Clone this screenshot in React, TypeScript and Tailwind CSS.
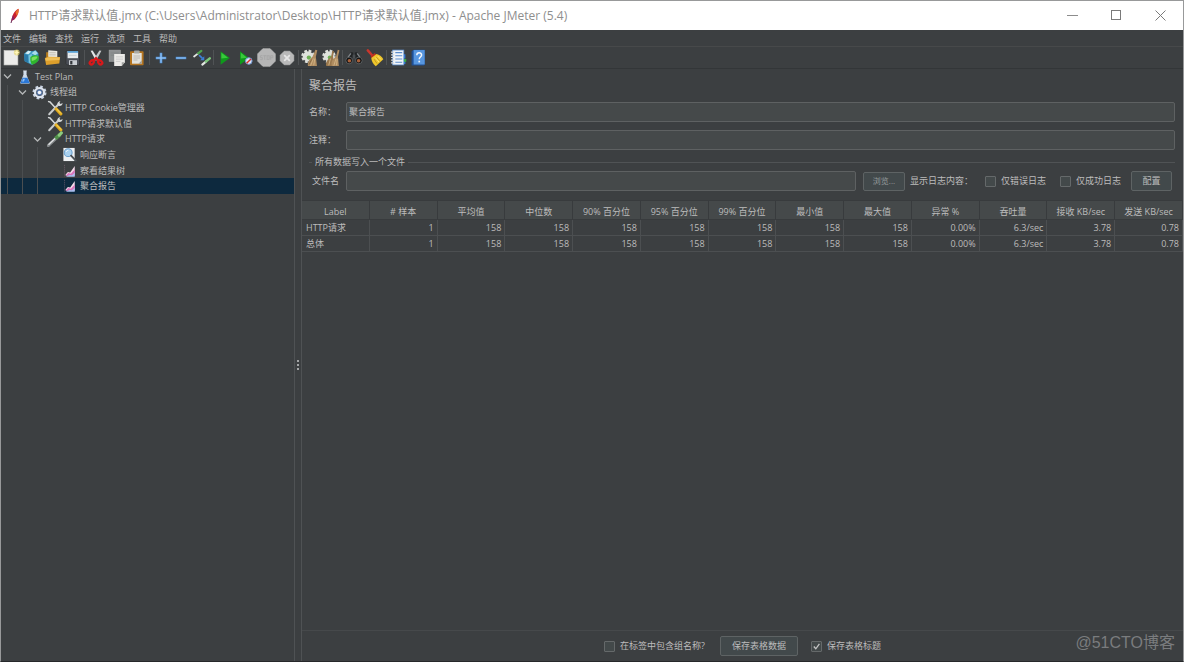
import React from "react";

function Svg({ size = 16, children }: { size?: number; children: React.ReactNode }) {
  return (
    <svg width={size} height={size} viewBox="0 0 16 16" fill="none" aria-hidden="true" className="block shrink-0">
      {children}
    </svg>
  );
}

/* ---------- toolbar icons ---------- */

const NewIcon = () => (
  <Svg size={17}>
    <rect x="1" y="1.5" width="13" height="13.5" fill="#ececea" stroke="#cfcfcb" strokeWidth=".6" />
    <circle cx="13" cy="3.2" r="2.8" fill="#e8d76a" opacity=".65" />
    <path d="M13 .6l.7 1.9 1.9.7-1.9.7-.7 1.9-.7-1.9-1.9-.7 1.9-.7z" fill="#fff6b8" />
  </Svg>
);

const TemplatesIcon = () => (
  <Svg size={17}>
    <path d="M1 4.5l3.5-3 4 .5 3.5-.8L14.5 4v7l-6 4-7-3.5z" fill="#3d9bc4" />
    <path d="M1 4.5l4 1.5v7.5L1.5 11z" fill="#2a79a8" />
    <path d="M2 4.2L5 1.7l2.8.6L5.2 5z" fill="#d3ecf5" />
    <path d="M8 4l3.5-2.6L14 4l-2.5 1.8z" fill="#a9dcea" />
    <path d="M5.2 6l3-1.5 1 9.5-3.6-1z" fill="#78c4dc" />
    <path d="M7 7.5c2.5-2 6-2 7.8-.6.4 3.600-.8 6.300-6.300 8C7 13 6.600 10 7 7.500z" fill="#2fb52c" />
    <path d="M8 8.200c1.800-1.300 4-1.500 5.800-.8-1 2.400-3 3.600-5.500 4z" fill="#7be05f" />
  </Svg>
);

const OpenIcon = () => (
  <Svg size={17}>
    <path d="M2 3h3l1 1v8H2z" fill="#b67b1c" />
    <path d="M4 1.200l8.500.6v8H4z" fill="#e9e7df" />
    <path d="M5 3.500h6M5 5.500h6" stroke="#b9b6aa" strokeWidth=".8" />
    <path d="M.8 8.500l3-1.200 11.400.2-.8 6.200L2 15z" fill="#dd9f2b" />
    <path d="M1.200 8.900l3-1.100 10.600.2-.3 2.300-12.800.8z" fill="#efbf58" />
  </Svg>
);

const SaveIcon = () => (
  <Svg size={16}>
    <path d="M1 1h13.500v14H2.500L1 13.500z" fill="#4c5058" stroke="#2b2d31" strokeWidth=".6" />
    <rect x="2.600" y="1" width="10.400" height="7.200" fill="#e7ebee" />
    <rect x="2.600" y="1" width="10.400" height="1.800" fill="#5aa2d6" />
    <path d="M4 5.400h7.500" stroke="#c2c8cc" strokeWidth=".7" />
    <rect x="4" y="10.200" width="8" height="4.800" fill="#c9cdd1" />
    <rect x="5.200" y="11" width="2.200" height="3.400" fill="#34373c" />
  </Svg>
);

const CutIcon = () => (
  <Svg size={16}>
    <path d="M2.600.8l2-.4 5.600 8.800-2.400 1.400z" fill="#e4e6e8" />
    <path d="M13.400.8l-2-.4L5.800 9.200l2.400 1.400z" fill="#c4c8ca" />
    <ellipse cx="3.800" cy="12.400" rx="2.300" ry="1.700" transform="rotate(-45 3.800 12.400)" stroke="#d8191b" strokeWidth="2.300" />
    <ellipse cx="12.200" cy="12.400" rx="2.300" ry="1.700" transform="rotate(45 12.200 12.400)" stroke="#d8191b" strokeWidth="2.300" />
    <path d="M5.200 10.800L8 8.200l2.800 2.600" stroke="#d8191b" strokeWidth="2.400" />
  </Svg>
);

const CopyIcon = () => (
  <Svg size={18}>
    <rect x="1" y="1" width="10" height="10" fill="#8d9091" stroke="#a4a6a6" strokeWidth=".5" />
    <path d="M2.500 3.500h7M2.500 5.500h7" stroke="#7f8384" strokeWidth=".7" />
    <path d="M5.500 4.500H15v7.300L12.200 15H5.500z" fill="#ecebe8" />
    <path d="M7 7h6.400M7 9h6.400M7 11h4" stroke="#c9cac8" strokeWidth=".8" />
    <path d="M15 11.800h-2.800V15z" fill="#a3a4a2" />
  </Svg>
);

const PasteIcon = () => (
  <Svg size={16}>
    <rect x="1" y="1.200" width="13.600" height="14" rx=".8" fill="#b37420" />
    <rect x="3" y="3" width="9.700" height="10.700" fill="#e3e2dc" />
    <rect x="5" y=".5" width="5.600" height="3" rx=".8" fill="#a9aaa5" />
    <path d="M4.500 6h6.500M4.500 8h6.500M4.500 10h4" stroke="#b2b1aa" strokeWidth=".8" />
    <path d="M12.700 10.400L9.500 13.700h3.200z" fill="#9c9a92" />
  </Svg>
);

const PlusIcon = () => (
  <Svg size={14}>
    <path d="M8 2v12M2 8h12" stroke="#4b8fd8" strokeWidth="3" />
    <path d="M8 2.600v10.800M2.600 8h10.800" stroke="#a5cdf5" strokeWidth="1.100" />
  </Svg>
);

const MinusIcon = () => (
  <Svg size={14}>
    <path d="M2 8h12" stroke="#4b8fd8" strokeWidth="2.800" />
    <path d="M2.600 8h10.800" stroke="#a5cdf5" strokeWidth="1" />
  </Svg>
);

const ToggleIcon = () => (
  <Svg size={18}>
    <path d="M1 6.700L4.600 3.900" stroke="#e4e7e4" strokeWidth="1.600" strokeLinecap="round" />
    <path d="M4.600 3.900L7.400 1.700" stroke="#4fa350" strokeWidth="2" strokeLinecap="round" />
    <path d="M8.300 13.900l3.200-2.700" stroke="#e4e7e4" strokeWidth="1.900" strokeLinecap="round" />
    <path d="M11.500 11.100l3.400-2.800" stroke="#7cc77b" strokeWidth="2.200" strokeLinecap="round" />
    <path d="M5.400 5.400l3 3" stroke="#3d7fd4" strokeWidth="1.500" />
    <path d="M10 6.400v3.600H6.400z" fill="#3d7fd4" />
  </Svg>
);

const StartIcon = () => (
  <Svg size={16}>
    <path d="M3.600 1.200L12.800 8l-9.200 6.800z" fill="#0f9a1c" />
    <path d="M4.400 2.800L11 7.800l-6.600.8z" fill="#39c93c" />
  </Svg>
);

const StartNoTimersIcon = () => (
  <Svg size={16}>
    <path d="M2 1.200L11 8l-9 6.800z" fill="#0f9a1c" />
    <path d="M2.800 2.800L9 7.800l-6.200.8z" fill="#39c93c" />
    <circle cx="10.800" cy="11" r="3.300" fill="#dfe6f4" stroke="#6f94cf" strokeWidth="1" />
    <path d="M8.600 13.200L13 9" stroke="#d8322b" strokeWidth="1.500" />
  </Svg>
);

const StopIcon = () => (
  <Svg size={19}>
    <path d="M4.900.6h6.200l4.300 4.300v6.200l-4.300 4.300H4.900L.6 11.100V4.900z" fill="#b6b6b6" stroke="#c8c8c8" strokeWidth=".5" />
    <g stroke="#a6a6a6" strokeWidth=".8">
      <path d="M4.600 6.500H2.900v1.600h1.600v1.700H2.700" />
      <path d="M5.300 6.500h2.500M6.500 6.500v3.500" />
      <rect x="8.500" y="6.500" width="1.700" height="3.200" />
      <path d="M11.500 10V6.500h1.800v1.700h-1.800" />
    </g>
  </Svg>
);

const ShutdownIcon = () => (
  <Svg size={16}>
    <path d="M5.200 1.200h5.600l4 4v5.600l-4 4H5.200l-4-4V5.200z" fill="#b9b9b9" stroke="#cdcdcd" strokeWidth=".5" />
    <path d="M5.200 5.200l5.600 5.600M10.800 5.200l-5.600 5.600" stroke="#e6e6e6" strokeWidth="1.800" />
  </Svg>
);

const Gear = () => (
  <>
    <circle cx="6.200" cy="6.500" r="5" stroke="#dfe2dc" strokeWidth="2" strokeDasharray="2.400 1.530" />
    <circle cx="6.200" cy="6.500" r="4.600" fill="#dfe2dc" />
    <circle cx="7" cy="7.600" r="1.900" fill="#6dae55" />
  </>
);

const ClearIcon = () => (
  <Svg size={18}>
    <Gear />
    <path d="M12.800.6l1.700.5-1.300 5.700 1 8.200-8 .2c-.5-1.800.2-4 1.300-5.700l3-3z" fill="#b08d61" />
    <path d="M11 8.500L8.500 14.800M12.300 8.500l-1 6" stroke="#d3b486" strokeWidth=".8" />
    <path d="M9.500 9.200L7 14" stroke="#7d5f39" strokeWidth=".7" />
  </Svg>
);

const ClearAllIcon = () => (
  <Svg size={18}>
    <Gear />
    <path d="M9.300 1.600l1.300.4-.8 4.600 1 8.400-7 .2c-.7-1.800.2-4 1.300-5.600l2.900-2.700z" fill="#9a784d" />
    <path d="M14 .6l1.500.5-1.300 5.700.8 8.200-6.300.2c-.5-1.800-.3-4 .8-5.700l3-3z" fill="#b08d61" />
    <path d="M12.500 8.500l-2 6.300M7.500 8.500l-1.500 6M13.500 9l-.6 5.500" stroke="#d3b486" strokeWidth=".8" />
  </Svg>
);

const SearchIcon = () => (
  <Svg size={18}>
    <path d="M5.300 2.800l2 .4v4.600l-3 2L.6 9.200z" fill="#202325" />
    <path d="M10.700 2.800l-2 .4v4.600l3 2 3.700-.6z" fill="#202325" />
    <rect x="6.800" y="5" width="2.400" height="3.400" fill="#4b4f52" />
    <path d="M5.200 3.800L2.600 7.400M10.800 3.800l2.600 3.600" stroke="#80868a" strokeWidth="1.200" />
    <circle cx="3.700" cy="10.200" r="3" fill="#141516" stroke="#5f6365" strokeWidth=".8" />
    <circle cx="12.300" cy="10.200" r="3" fill="#141516" stroke="#5f6365" strokeWidth=".8" />
    <circle cx="3.900" cy="10.400" r="1.600" fill="#a8603a" />
    <circle cx="12.100" cy="10.400" r="1.600" fill="#a8603a" />
  </Svg>
);

const BroomIcon = () => (
  <Svg size={18}>
    <path d="M1.600 1.200L6 6.200" stroke="#c8362c" strokeWidth="2.200" strokeLinecap="round" />
    <path d="M4 6.900l3.700-3.300 2.600 2.600-3.700 3.300z" fill="#b9301f" />
    <path d="M4.700 8L9.400 4.400c2.400.5 4.600 2.300 6 4.600l-6.700 6.300c-2.400-1.600-3.800-4.500-4-7.300z" fill="#efc62b" />
    <path d="M7.200 9l2.600 4M9.200 7.400l3.300 3.600" stroke="#b8901d" strokeWidth=".7" />
    <path d="M8.300 7.600l3.200 4M10.400 6.200l3 3.200" stroke="#fbe67a" strokeWidth=".8" />
  </Svg>
);

const LogIcon = () => (
  <Svg size={17}>
    <path d="M12 5h2.500v4H12zM12 9.500h2.500V14H12z" fill="#2f77d2" />
    <rect x="12.500" y="9.500" width="2.800" height="2.500" fill="#38b13a" />
    <rect x="2.500" y="1" width="10.500" height="14" fill="#f1f4f8" stroke="#5f93d6" strokeWidth=".7" />
    <path d="M5 3.400h6.500M5 6.400h6.500M5 9.400h6.500M5 12.400h6.500" stroke="#5b8ccc" strokeWidth="1" />
    <path d="M1 3h3M1 5.500h3M1 8h3M1 10.500h3M1 13h3" stroke="#d6d9db" strokeWidth="1.100" />
  </Svg>
);

const HelpIcon = () => (
  <Svg size={17}>
    <path d="M1.500 2L3.500.7H14v14L13 15.500H1.500z" fill="#1f4f94" />
    <rect x="3.400" y="1" width="10.400" height="13.600" fill="#5796df" />
    <path d="M6.400 5.800c0-3 4.500-2.900 4.500-.2 0 1.900-2.200 1.900-2.200 4" stroke="#f3f7fc" strokeWidth="1.400" />
    <rect x="7.900" y="11" width="1.600" height="1.600" fill="#f3f7fc" />
  </Svg>
);

/* ---------- tree icons ---------- */

const FlaskIcon = () => (
  <Svg size={14}>
    <path d="M6 1h4M6.700 1v4.500L3 15h10L9.300 5.500V1" fill="#cfdcea" stroke="#dbe4ee" strokeWidth=".9" />
    <path d="M5.200 8.800h5.600l2.600 6.200H2.600z" fill="#2b78d8" />
    <path d="M5.800 10h2.200l-1.200 3.200H4.700z" fill="#8fc0f5" />
  </Svg>
);

const ThreadIcon = () => (
  <Svg size={15}>
    <circle cx="8" cy="8" r="6.200" stroke="#c9d3e2" strokeWidth="2.600" strokeDasharray="2.700 2.170" />
    <circle cx="8" cy="8" r="4.800" stroke="#dde4ee" strokeWidth="2.400" />
    <circle cx="8" cy="8" r="3.300" fill="#5877a8" />
    <circle cx="8" cy="8" r="1.900" fill="#f2f5f9" />
  </Svg>
);

const ToolsIcon = () => (
  <Svg size={16}>
    <path d="M2.200 14.200L11.800 4" stroke="#c9cccd" strokeWidth="2" strokeLinecap="round" />
    <path d="M10.400 4.800c-.4-2 1-3.700 3-3.900l-1 2 1.200 1.200 2-1c0 2-1.800 3.300-3.700 2.900z" fill="#d5d8d9" />
    <path d="M1.600 1.600l1.400.4 5.700 6.200" stroke="#d5d8d9" strokeWidth="1.500" strokeLinecap="round" />
    <path d="M9.200 9l4.600 4.900" stroke="#e0a91b" strokeWidth="3.200" strokeLinecap="round" />
    <path d="M9.400 8.700l4.700 4.900" stroke="#f8dc6e" strokeWidth="1" />
  </Svg>
);

const DropperIcon = () => (
  <Svg size={16}>
    <path d="M1.200 14.600L9.800 6.600" stroke="#85898b" strokeWidth="3" strokeLinecap="round" />
    <path d="M1.500 13.800L9.200 6.400" stroke="#e4e6e7" strokeWidth="1.300" />
    <path d="M8.400 7.700l4.800-4.400" stroke="#4f8f48" strokeWidth="3.800" />
    <path d="M12.200 4.200l2.200-2.300" stroke="#8ccb7e" strokeWidth="3" strokeLinecap="round" />
  </Svg>
);

const AssertionIcon = () => (
  <Svg size={15}>
    <rect x="1.500" y="1" width="12" height="14" fill="#eef0f2" />
    <circle cx="6.600" cy="6" r="4.200" fill="#a9d0ee" stroke="#6a9ecb" strokeWidth="1.100" />
    <path d="M4.400 5.200c.4-1.100 1.300-1.600 2.300-1.600" stroke="#fff" strokeWidth="1" />
    <path d="M9.700 9.200l5 5.300" stroke="#4b5055" strokeWidth="2" strokeLinecap="round" />
  </Svg>
);

const ChartIcon = () => (
  <Svg size={14}>
    <path d="M1.800 1v13.600" stroke="#8c6f80" strokeWidth=".8" strokeDasharray="1 1.200" />
    <path d="M3 12l2.600-3 2.600.8L13.400 2.400v10.600H3z" fill="#f5dcea" />
    <path d="M3 13.500l3-3.300 3 .8 4.400-4.600v7.100z" fill="#d873ba" />
    <path d="M3 14.600l4.500-2 2.700.3 3.200-2.900v4.600z" fill="#a9c0ee" />
  </Svg>
);

const Chevron = () => (
  <svg width="9" height="9" viewBox="0 0 9 9" fill="none" aria-hidden="true" className="block">
    <path d="M1 2.500L4.500 6 8 2.500" stroke="#b4b6b7" strokeWidth="1.300" />
  </svg>
);

const FeatherIcon = () => (
  <svg width="12" height="16" viewBox="0 0 12 16" fill="none" aria-hidden="true" className="block">
    <path d="M2 15L3.500 9.500" stroke="#6b2a57" strokeWidth="1" />
    <path d="M2.800 12.500C2.600 8 5.500 2.500 9.500.8c.6 3-.8 6.700-2.800 9.200-1.100 1.300-2.400 2.300-3.900 2.500z" fill="#c9202e" />
    <path d="M9.500.8c.6 3-.4 5.200-1.800 6.900L6.500 4.500C7.400 2.900 8.400 1.500 9.500.8z" fill="#e8702b" />
    <path d="M2.800 12.500c0-1.800.4-3.700 1.200-5.500l1.700 4c-.9.800-1.900 1.400-2.900 1.500z" fill="#8b2264" />
  </svg>
);

/* ---------- data ---------- */

const menus = ["文件", "编辑", "查找", "运行", "选项", "工具", "帮助"];

type Tool = { label: string; icon: React.ComponentType };

const toolGroups: Tool[][] = [
  [
    { label: "新建", icon: NewIcon },
    { label: "模板", icon: TemplatesIcon },
    { label: "打开", icon: OpenIcon },
    { label: "保存", icon: SaveIcon },
  ],
  [
    { label: "剪切", icon: CutIcon },
    { label: "复制", icon: CopyIcon },
    { label: "粘贴", icon: PasteIcon },
  ],
  [
    { label: "展开", icon: PlusIcon },
    { label: "收起", icon: MinusIcon },
    { label: "切换", icon: ToggleIcon },
  ],
  [
    { label: "启动", icon: StartIcon },
    { label: "不停顿开始", icon: StartNoTimersIcon },
    { label: "停止", icon: StopIcon },
    { label: "关闭", icon: ShutdownIcon },
  ],
  [
    { label: "清除", icon: ClearIcon },
    { label: "清除全部", icon: ClearAllIcon },
  ],
  [
    { label: "查找", icon: SearchIcon },
    { label: "重置搜索", icon: BroomIcon },
  ],
  [
    { label: "函数助手", icon: LogIcon },
    { label: "帮助", icon: HelpIcon },
  ],
];

type Node = { label: string; depth: number; open?: boolean; icon: React.ComponentType; selected?: boolean };

const nodes: Node[] = [
  { label: "Test Plan", depth: 0, open: true, icon: FlaskIcon },
  { label: "线程组", depth: 1, open: true, icon: ThreadIcon },
  { label: "HTTP Cookie管理器", depth: 2, icon: ToolsIcon },
  { label: "HTTP请求默认值", depth: 2, icon: ToolsIcon },
  { label: "HTTP请求", depth: 2, open: true, icon: DropperIcon },
  { label: "响应断言", depth: 3, icon: AssertionIcon },
  { label: "察看结果树", depth: 3, icon: ChartIcon },
  { label: "聚合报告", depth: 3, icon: ChartIcon, selected: true },
];

const columns = [
  "Label", "# 样本", "平均值", "中位数", "90% 百分位", "95% 百分位", "99% 百分位",
  "最小值", "最大值", "异常 %", "吞吐量", "接收 KB/sec", "发送 KB/sec",
];

const rows = [
  ["HTTP请求", "1", "158", "158", "158", "158", "158", "158", "158", "0.00%", "6.3/sec", "3.78", "0.78"],
  ["总体", "1", "158", "158", "158", "158", "158", "158", "158", "0.00%", "6.3/sec", "3.78", "0.78"],
];

/* ---------- pieces ---------- */

const field = "min-w-0 flex-1 rounded-[2px] border border-[#5e6162] bg-[#45494a] px-[2px] text-[#bcbcbc] outline-none";
const button = "rounded-[2px] border border-[#5e6364] bg-[#42494b]";

function Check({ label, checked, className = "" }: { label: string; checked?: boolean; className?: string }) {
  return (
    <label className={"flex items-center gap-[5px] whitespace-nowrap " + className}>
      <span className="grid size-[11px] place-items-center">
        <input
          type="checkbox"
          defaultChecked={checked}
          className="peer col-start-1 row-start-1 size-[11px] appearance-none rounded-[1px] border border-[#65696a] bg-[#43494a]"
        />
        <svg
          viewBox="0 0 11 11"
          fill="none"
          aria-hidden="true"
          className="pointer-events-none col-start-1 row-start-1 hidden size-[11px] peer-checked:block"
        >
          <path d="M2.800 5.500l2 2.300L8.400 2.800" stroke="#c4c4c4" strokeWidth="1.300" />
        </svg>
      </span>
      {label}
    </label>
  );
}

function TreeRow({ node }: { node: Node }) {
  const Icon = node.icon;
  return (
    <li className={"flex items-stretch pl-px " + (node.selected ? "bg-[#0d293e]" : "")}>
      {Array.from({ length: node.depth }, (_, i) => (
        <span key={i} className="flex w-[15px] shrink-0 pl-[5px]">
          <span className="w-px bg-[#4b4e50]" />
        </span>
      ))}
      <span className="flex w-[13px] shrink-0 items-center pl-px">{node.open && <Chevron />}</span>
      <span className="mr-px flex w-[19px] shrink-0 items-center justify-center">
        <Icon />
      </span>
      <span className="self-center whitespace-nowrap">{node.label}</span>
    </li>
  );
}

export default function App() {
  return (
    <div className="relative flex min-h-screen flex-col border-x border-t border-[#98999a] border-b border-b-[#26282a] bg-[#3c3f41] font-['Open_Sans','Noto_Sans_CJK_SC',sans-serif] text-[9px] leading-[14px] text-[#bcbcbc]">
      <header className="flex h-[29px] items-center bg-white pr-px text-[#8e8e8e]">
        <span className="pl-[8px]">
          <FeatherIcon />
        </span>
        <h1 className="flex-1 truncate pl-[8px] text-[12px] leading-[16px]">
          HTTP请求默认值.jmx (C:\Users\Administrator\Desktop\HTTP请求默认值.jmx) - Apache JMeter (5.4)
        </h1>
        <div className="flex items-center">
          <button aria-label="最小化" className="flex w-[44px] justify-center">
            <svg width="11" height="11" viewBox="0 0 11 11" fill="none"><path d="M0 5.500h11" stroke="#8c8c8c" /></svg>
          </button>
          <button aria-label="最大化" className="flex w-[44px] justify-center">
            <svg width="11" height="11" viewBox="0 0 11 11" fill="none"><rect x=".5" y=".5" width="9" height="9" stroke="#7a7a7a" /></svg>
          </button>
          <button aria-label="关闭窗口" className="flex w-[44px] justify-center">
            <svg width="11" height="11" viewBox="0 0 11 11" fill="none"><path d="M.5.5l10 10M10.500.5l-10 10" stroke="#7a7a7a" /></svg>
          </button>
        </div>
      </header>

      <nav className="flex h-[17px] items-center gap-[8px] border-b border-[#47494a] pt-[2px] pl-[2px]">
        {menus.map((m) => (
          <button key={m}>{m}</button>
        ))}
      </nav>

      <div className="border-b border-[#333638]">
        <div className="flex h-[21px] w-[428px] items-center">
          {toolGroups.map((group, g) => (
            <React.Fragment key={g}>
              {g > 0 && (
                <span className="flex w-[3px] shrink-0 justify-center">
                  <span className="h-[15px] w-px bg-[#505355]" />
                </span>
              )}
              {group.map(({ label, icon: Icon }) => (
                <button key={label} aria-label={label} className="flex min-w-0 flex-1 justify-center">
                  <Icon />
                </button>
              ))}
            </React.Fragment>
          ))}
        </div>
      </div>

      <div className="flex flex-1">
        <aside className="w-[294px] shrink-0 border-r border-[#4f5254]">
          <ul className="grid h-[125px] grid-rows-[repeat(8,minmax(0,1fr))]">
            {nodes.map((n, i) => (
              <TreeRow key={i} node={n} />
            ))}
          </ul>
        </aside>

        <div className="flex w-[7px] shrink-0 flex-col items-center justify-center gap-[2px] border-r border-[#4f5254]">
          <span className="size-[2px] bg-[#a3a5a6]" />
          <span className="size-[2px] bg-[#a3a5a6]" />
          <span className="size-[2px] bg-[#a3a5a6]" />
        </div>

        <main className="flex min-w-0 flex-1 flex-col">
          <h2 className="pt-[8px] pl-[7px] text-[12px] leading-[18px]">聚合报告</h2>

          <div className="mt-[7px] flex h-[20px] items-stretch pr-[8px] pl-[7px]">
            <label htmlFor="name" className="w-[37px] shrink-0 self-center">名称：</label>
            <input id="name" defaultValue="聚合报告" className={field} />
          </div>
          <div className="mt-[8px] flex h-[20px] items-stretch pr-[8px] pl-[7px]">
            <label htmlFor="comment" className="w-[37px] shrink-0 self-center">注释：</label>
            <input id="comment" className={field} />
          </div>

          <section className="mt-[5px] pr-[8px] pl-[7px]">
            <h3 className="flex items-center gap-[3px]">
              <span className="h-px w-[3px] bg-[#505355]" />
              所有数据写入一个文件
              <span className="h-px flex-1 bg-[#505355]" />
            </h3>
            <div className="mt-[2px] flex h-[20px] items-center pr-[3px]">
              <label htmlFor="file" className="w-[37px] shrink-0 pl-[3px]">文件名</label>
              <input id="file" className={field + " h-full"} />
              <button className={button + " ml-[7px] h-[19px] w-[42px] text-[8px] leading-[12px] text-[#959a9b]"}>浏览...</button>
              <span className="ml-[5px] w-[75px] whitespace-nowrap">显示日志内容：</span>
              <Check label="仅错误日志" className="w-[75px]" />
              <Check label="仅成功日志" className="w-[71px]" />
              <button className={button + " h-full w-[41px]"}>配置</button>
            </div>
          </section>

          <table className="mt-[9px] w-full table-fixed border-separate border-spacing-0">
            <thead>
              <tr className="bg-[#45494a]">
                {columns.map((c) => (
                  <th key={c} className="h-[20px] border-t border-r border-b border-t-[#383b3d] border-r-[#383b3d] border-b-[#383b3d] p-0 pt-[3px] font-normal whitespace-nowrap">
                    {c}
                  </th>
                ))}
              </tr>
            </thead>
            <tbody>
              {rows.map((r) => (
                <tr key={r[0]}>
                  {r.map((c, i) => (
                    <td key={i} className={"h-[16px] border-r border-b border-[#4c4f51] py-0 " + (i === 0 ? "pl-[4px] text-left" : "pr-[3px] text-right")}>
                      {c}
                    </td>
                  ))}
                </tr>
              ))}
            </tbody>
          </table>

          <footer className="mt-auto flex h-[31px] items-center justify-center border-t border-[#46494b]">
            <Check label="在标签中包含组名称?" />
            <button className={button + " mr-[13px] ml-[15px] h-[20px] w-[78px]"}>保存表格数据</button>
            <Check label="保存表格标题" checked />
          </footer>
        </main>
      </div>

      <div className="pointer-events-none absolute right-[8px] bottom-[7px] font-['Liberation_Sans','Noto_Sans_CJK_SC',sans-serif] text-[16px] leading-[22px] text-[#7a7c7e]">
        @51CTO博客
      </div>
    </div>
  );
}
